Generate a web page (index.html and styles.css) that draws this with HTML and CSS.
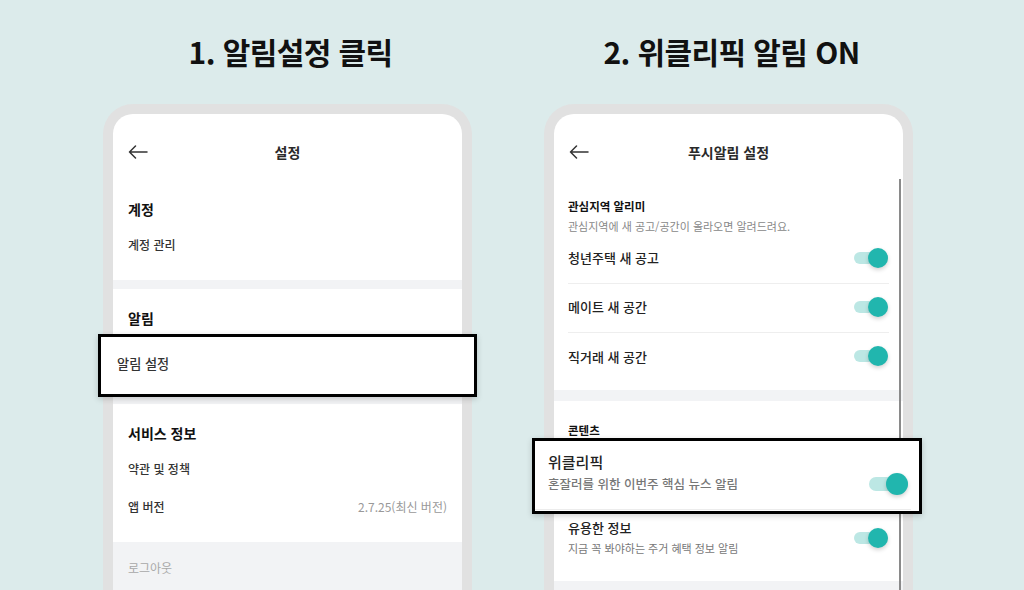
FILE: index.html
```html
<!DOCTYPE html>
<html lang="ko">
<head>
  <meta charset="UTF-8" />
  <title>알림 설정 가이드</title>
  <link rel="stylesheet" href="styles.css">
</head>
<body>
  <div class="page">

    <!-- step 1 -->
    <div class="panel">
      <h1 class="step-title">1. 알림설정 클릭</h1>
      <div class="phone">
        <div class="app-header">
          <svg class="back" width="20" height="14" viewBox="0 0 20 14">
            <path d="M19 7H1.5M7.5 1L1.5 7l6 6" fill="none" stroke="#333" stroke-width="1.5" stroke-linecap="round" stroke-linejoin="round"/>
          </svg>
          <span class="app-title">설정</span>
        </div>

        <div class="menu-section">
          <div class="menu-title">계정</div>
          <div class="menu-row">계정 관리</div>
        </div>
        <div class="band"></div>

        <div class="menu-section tall">
          <div class="menu-title">알림</div>
          <div class="menu-row">
            <div class="highlight hl-menu">알림 설정</div>
          </div>
        </div>
        <div class="band"></div>

        <div class="menu-section">
          <div class="menu-title">서비스 정보</div>
          <div class="menu-row">약관 및 정책</div>
          <div class="menu-row">앱 버전 <span class="version">2.7.25(최신 버전)</span></div>
        </div>
        <div class="logout">로그아웃</div>
      </div>
    </div>

    <!-- step 2 -->
    <div class="panel">
      <h1 class="step-title">2. 위클리픽 알림 ON</h1>
      <div class="phone">
        <div class="app-header">
          <svg class="back" width="20" height="14" viewBox="0 0 20 14">
            <path d="M19 7H1.5M7.5 1L1.5 7l6 6" fill="none" stroke="#333" stroke-width="1.5" stroke-linecap="round" stroke-linejoin="round"/>
          </svg>
          <span class="app-title">푸시알림 설정</span>
        </div>
        <div class="scrollbar"></div>

        <div class="push-section">
          <div class="push-title">관심지역 알리미</div>
          <div class="push-desc">관심지역에 새 공고/공간이 올라오면 알려드려요.</div>
          <div class="push-row">청년주택 새 공고 <span class="toggle"></span></div>
          <div class="push-row">메이트 새 공간 <span class="toggle"></span></div>
          <div class="push-row">직거래 새 공간 <span class="toggle"></span></div>
        </div>
        <div class="band wide"></div>

        <div class="push-section second">
          <div class="push-title">콘텐츠</div>
          <div class="push-row picked">
            <div class="highlight hl-push">
              <div>
                <div class="hl-name">위클리픽</div>
                <div class="hl-desc">혼잘러를 위한 이번주 핵심 뉴스 알림</div>
              </div>
              <span class="toggle big"></span>
            </div>
          </div>
          <div class="push-row double">
            <div>
              <div class="row-name">유용한 정보</div>
              <div class="row-desc">지금 꼭 봐야하는 주거 혜택 정보 알림</div>
            </div>
            <span class="toggle"></span>
          </div>
        </div>
        <div class="band wide"></div>
      </div>
    </div>

  </div>
</body>
</html>
```

FILE: styles.css
```css
:root {
  --bg-color: #dcebeb;
  --frame-color: #e1e1e1;
  --band-color: #f2f3f5;
  --teal: #21b6ae;
  --teal-light: #bce7e4;
}

body {
  margin: 0;
  background-color: var(--bg-color);
  font-family: 'Noto Sans CJK KR', sans-serif;
  color: #222;
  overflow: hidden;
}

.page {
  display: flex;
  gap: 72px;
  padding-left: 103px;
  height: 590px;
  overflow: hidden;
}

.panel {
  width: 369px;
  display: flex;
  flex-direction: column;
}

.step-title {
  flex: none;
  height: 104px;
  margin: 0;
  display: flex;
  align-items: center;
  justify-content: center;
  font-size: 30px;
  font-weight: 700;
  letter-spacing: -0.6px;
  color: #111;
  padding: 0 0 3px 6px;
  box-sizing: border-box;
}

.phone {
  position: relative;
  flex: none;
  height: 600px;
  background: #fff;
  border: 10px solid var(--frame-color);
  border-bottom: none;
  border-radius: 30px 30px 0 0;
}

.app-header {
  position: relative;
  height: 56px;
  padding-top: 10px;
  display: flex;
  align-items: center;
  justify-content: center;
}

.back {
  position: absolute;
  left: 15px;
  top: 31px;
}

.app-title {
  font-size: 14px;
  font-weight: 700;
  color: #2a2a2a;
}

.band {
  height: 9px;
  background: var(--band-color);
}

.band.wide {
  height: 11px;
}

/* settings menu */
.menu-section {
  padding: 19px 15px 15px;
}

.menu-section.tall {
  padding-bottom: 21px;
}

.menu-title {
  height: 20px;
  line-height: 20px;
  margin-bottom: 8px;
  font-size: 14px;
  font-weight: 700;
  color: #111;
}

.menu-row {
  position: relative;
  box-sizing: border-box;
  height: 38px;
  padding-bottom: 3px;
  display: flex;
  align-items: center;
  justify-content: space-between;
  font-size: 12px;
  font-weight: 500;
  color: #333;
}

.version {
  font-size: 12px;
  font-weight: 400;
  color: #999;
}

.logout {
  height: 60px;
  padding: 16px 15px 0;
  background: var(--band-color);
  font-size: 12px;
  line-height: 20px;
  color: #a8a8a8;
}

/* highlight boxes */
.highlight {
  position: absolute;
  z-index: 2;
  background: #fff;
  border: 3px solid #000;
  box-shadow: 0 2px 6px rgba(0, 0, 0, 0.18);
  box-sizing: border-box;
}

.hl-menu {
  top: -2px;
  left: -30px;
  right: -30px;
  height: 63px;
  display: flex;
  align-items: center;
  padding: 0 0 4px 16px;
  font-size: 13.2px;
  font-weight: 500;
  color: #333;
}

.hl-push {
  top: -4px;
  left: -36px;
  right: -33px;
  height: 76px;
  display: flex;
  justify-content: space-between;
  align-items: flex-start;
  padding: 11px 10px 0 13px;
}

.hl-push::after {
  content: "";
  position: absolute;
  left: 0;
  right: 8px;
  bottom: 1px;
  height: 1px;
  background: #ececec;
}

.hl-name {
  font-size: 15px;
  font-weight: 500;
  line-height: 20px;
  color: #222;
}

.hl-desc {
  margin-top: 3px;
  font-size: 12.5px;
  line-height: 18px;
  color: #777;
}

/* push settings */
.scrollbar {
  position: absolute;
  z-index: 1;
  right: 2px;
  top: 65px;
  bottom: 0;
  width: 2px;
  background: #8a8a8a;
}

.push-section {
  padding: 17px 14px 8px;
}

.push-section.second {
  padding-top: 20px;
  padding-bottom: 14px;
}

.push-title {
  height: 18px;
  line-height: 18px;
  margin-bottom: 3px;
  font-size: 11.5px;
  font-weight: 700;
  color: #111;
}

.push-desc {
  height: 17px;
  line-height: 16px;
  font-size: 11px;
  color: #888;
}

.push-row {
  position: relative;
  box-sizing: border-box;
  height: 49px;
  padding-bottom: 3px;
  display: flex;
  align-items: center;
  justify-content: space-between;
  font-size: 13px;
  font-weight: 500;
  color: #222;
  border-bottom: 1px solid #eee;
}

.push-row:last-child {
  border-bottom: none;
}

.push-row.picked {
  height: 69px;
  padding: 0;
}

.push-row.double {
  height: 56px;
  padding: 7px 0 9px;
}

.row-name {
  font-size: 13px;
  font-weight: 500;
  line-height: 18px;
  color: #222;
}

.row-desc {
  margin-top: 2px;
  font-size: 11px;
  font-weight: 400;
  line-height: 18px;
  color: #777;
}

.toggle {
  position: relative;
  width: 34px;
  height: 12px;
  margin-right: 1px;
  border-radius: 6px;
  background: var(--teal-light);
}

.toggle::after {
  content: "";
  position: absolute;
  right: 0;
  top: -4px;
  width: 20px;
  height: 20px;
  border-radius: 50%;
  background: var(--teal);
  box-shadow: 0 2px 4px rgba(0, 0, 0, 0.18);
}

.toggle.big {
  width: 39px;
  height: 14px;
  margin-top: 25px;
  border-radius: 7px;
}

.toggle.big::after {
  top: -4px;
  width: 22px;
  height: 22px;
}
```
